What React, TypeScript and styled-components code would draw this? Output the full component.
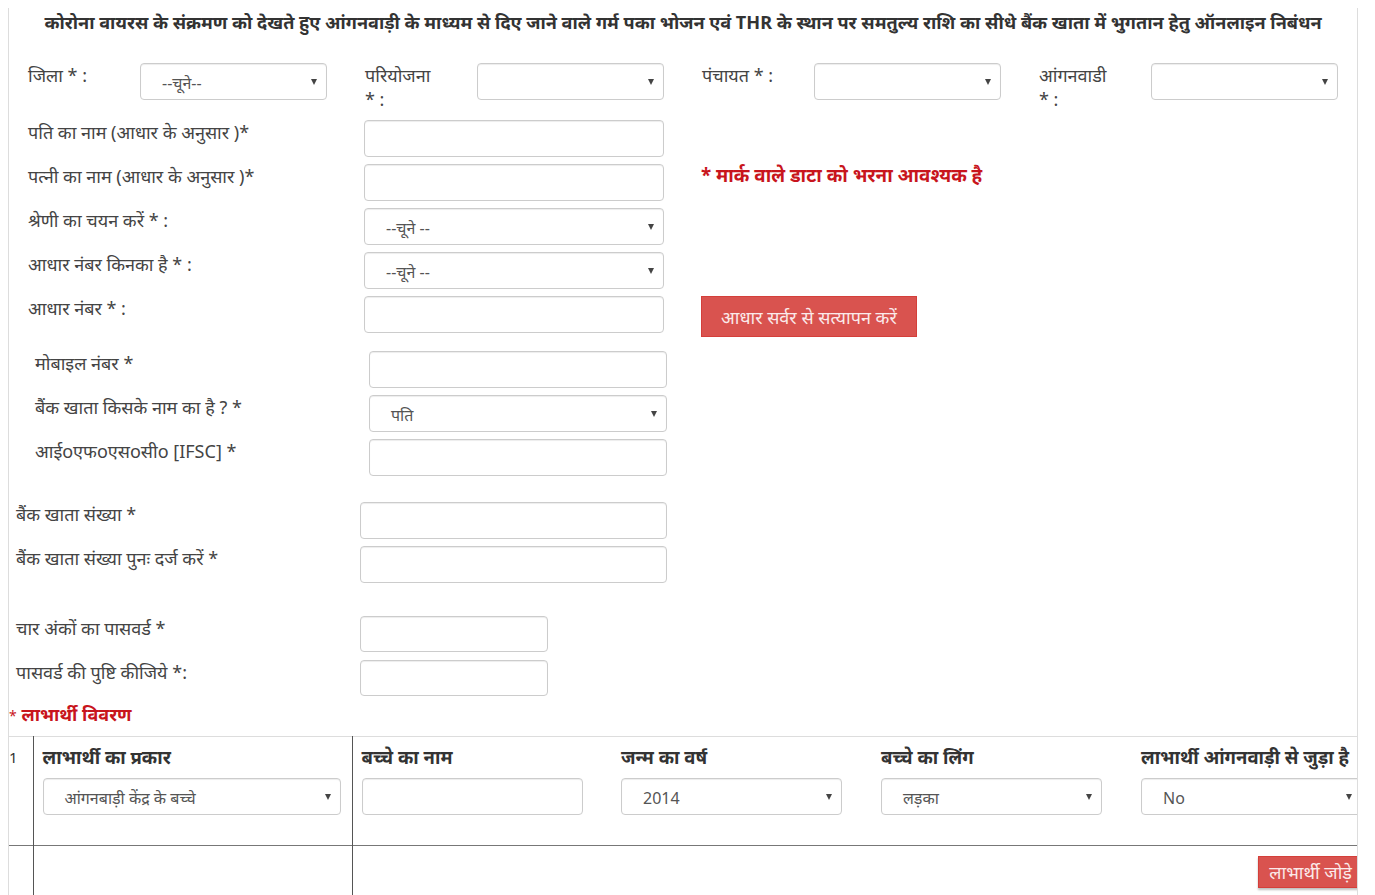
import React from "react";
import styled, { createGlobalStyle } from "styled-components";

const GlobalStyle = createGlobalStyle`
    body {
        margin: 8px;
        background: #fff;
        font-family: "Noto Sans", "Noto Sans Devanagari", "Liberation Sans", sans-serif;
        color: #333;
    }
    * {
        box-sizing: border-box;
    }
`;

const Panel = styled.div`
    width: 1350px;
    min-height: 900px;
    border-left: 1px solid #ddd;
    border-right: 1px solid #ddd;
    overflow: hidden;
`;

const Title = styled.h3`
    margin: 0;
    padding: 0;
    text-align: center;
    font-size: 18.1px;
    font-weight: 700;
    color: #333;
    line-height: 28px;
`;

const TopGrid = styled.div`
    display: grid;
    grid-template-columns: repeat(4, 337px);
    padding: 27px 0 0 19px;
`;

const TopCell = styled.div`
    display: grid;
    grid-template-columns: 112px 187px;
`;

const Label = styled.label`
    font-size: 18px;
    line-height: 24px;
    color: #444;
`;

const Row = styled.div<{ $left: number; $label: number; $top?: number }>`
    display: grid;
    grid-template-columns: ${(p) => p.$label}px auto 1fr;
    align-items: start;
    padding-left: ${(p) => p.$left}px;
    margin-top: ${(p) => p.$top ?? 7}px;
`;

const Input = styled.input<{ $w: number; $h?: number }>`
    width: ${(p) => p.$w}px;
    height: ${(p) => p.$h ?? 37}px;
    border: 1px solid #ccc;
    border-radius: 4px;
    box-shadow: inset 0 1px 1px rgba(0, 0, 0, 0.075);
    background: #fff;
    padding: 0 12px;
    font-size: 15px;
    outline: none;
`;

const SelectBox = styled.div<{ $w: number }>`
    position: relative;
    width: ${(p) => p.$w}px;
    height: 37px;
    border: 1px solid #ccc;
    border-radius: 4px;
    box-shadow: inset 0 1px 1px rgba(0, 0, 0, 0.075);
    background: #fff;
    padding: 2px 0 0 21px;
    display: flex;
    align-items: center;
    font-size: 16px;
    color: #555;
    white-space: nowrap;

    &::after {
        content: "";
        position: absolute;
        right: 9px;
        top: 15px;
        border-left: 3.5px solid transparent;
        border-right: 3.5px solid transparent;
        border-top: 6px solid #444;
    }
`;

const Side = styled.div`
    padding-left: 37px;
`;

const Note = styled.div`
    color: #c8151d;
    font-weight: 700;
    font-size: 18.8px;
    line-height: 22px;
`;

const RedButton = styled.button`
    background: #d9534f;
    color: #fbeaea;
    border: 1px solid #d43f3a;
    border-radius: 0;
    height: 41px;
    padding: 0 19px;
    font-size: 18px;
    font-family: inherit;
    cursor: pointer;
`;

const Group = styled.div<{ $top: number }>`
    margin-top: ${(p) => p.$top}px;
`;

const SectionHead = styled.div`
    margin-top: 6px;
    color: #c8151d;
    font-weight: 700;
    font-size: 18px;
    line-height: 24px;

    span {
        font-weight: 400;
        font-size: 14px;
    }
`;

const Table = styled.table`
    margin-top: 8px;
    border-collapse: collapse;
    table-layout: fixed;
    width: 1383px;

    tr:first-child td {
        border-top: 1px solid #ddd;
    }
`;

const Td = styled.td<{ $w?: number; $line?: boolean }>`
    width: ${(p) => (p.$w ? `${p.$w}px` : "auto")};
    vertical-align: top;
    padding: 7px 0 0 9px;
    border-right: ${(p) => (p.$line ? "1px solid #555" : "none")};
`;

const NumTd = styled(Td)`
    padding: 10px 0 0 0;
    font-size: 15px;
    color: #333;
`;

const FirstRow = styled.tr`
    height: 109px;
    border-bottom: 1px solid #777;
`;

const SecondRow = styled.tr`
    height: 60px;
`;

const Head = styled.div`
    font-size: 18.5px;
    font-weight: 700;
    line-height: 26px;
    color: #333;
    margin-bottom: 8px;
    white-space: nowrap;
`;

const ButtonCell = styled.td`
    text-align: right;
    padding: 10px 29px 0 0;
    vertical-align: top;
`;

const SmallRed = styled(RedButton)`
    height: 32px;
    padding: 0 10px;
    font-size: 18px;
    box-shadow: 0 2px 2px rgba(0, 0, 0, 0.25);
`;

type Col = { head: string; kind: "select" | "input"; value?: string; w: number };

const cols: Col[] = [
    { head: "बच्चे का नाम", kind: "input", w: 221 },
    { head: "जन्म का वर्ष", kind: "select", value: "2014", w: 221 },
    { head: "बच्चे का लिंग", kind: "select", value: "लड़का", w: 221 },
    { head: "लाभार्थी आंगनवाड़ी से जुड़ा है", kind: "select", value: "No", w: 221 },
];

const App = () => {
    return (
        <>
            <GlobalStyle />
            <Panel>
                <Title>
                    कोरोना वायरस के संक्रमण को देखते हुए आंगनवाड़ी के माध्यम से दिए जाने वाले गर्म पका भोजन एवं THR के स्थान पर समतुल्य राशि का सीधे बैंक खाता में भुगतान हेतु ऑनलाइन निबंधन
                </Title>

                <TopGrid>
                    <TopCell>
                        <Label>जिला * :</Label>
                        <SelectBox $w={187}>--चूने--</SelectBox>
                    </TopCell>
                    <TopCell>
                        <Label>परियोजना<br />* :</Label>
                        <SelectBox $w={187} />
                    </TopCell>
                    <TopCell>
                        <Label>पंचायत * :</Label>
                        <SelectBox $w={187} />
                    </TopCell>
                    <TopCell>
                        <Label>आंगनवाडी<br />* :</Label>
                        <SelectBox $w={187} />
                    </TopCell>
                </TopGrid>

                <Row $left={19} $label={336} $top={9}>
                    <Label>पति का नाम (आधार के अनुसार )*</Label>
                    <Input $w={300} />
                </Row>
                <Row $left={19} $label={336}>
                    <Label>पत्नी का नाम (आधार के अनुसार )*</Label>
                    <Input $w={300} />
                    <Side>
                        <Note>* मार्क वाले डाटा को भरना आवश्यक है</Note>
                    </Side>
                </Row>
                <Row $left={19} $label={336}>
                    <Label>श्रेणी का चयन करें * :</Label>
                    <SelectBox $w={300}>--चूने --</SelectBox>
                </Row>
                <Row $left={19} $label={336}>
                    <Label>आधार नंबर किनका है * :</Label>
                    <SelectBox $w={300}>--चूने --</SelectBox>
                </Row>
                <Row $left={19} $label={336}>
                    <Label>आधार नंबर * :</Label>
                    <Input $w={300} />
                    <Side>
                        <RedButton>आधार सर्वर से सत्यापन करें</RedButton>
                    </Side>
                </Row>

                <Group $top={14}>
                    <Row $left={26} $label={334}>
                        <Label>मोबाइल नंबर *</Label>
                        <Input $w={298} />
                    </Row>
                    <Row $left={26} $label={334}>
                        <Label>बैंक खाता किसके नाम का है ? *</Label>
                        <SelectBox $w={298}>पति</SelectBox>
                    </Row>
                    <Row $left={26} $label={334}>
                        <Label>आईoएफoएसoसीo [IFSC] *</Label>
                        <Input $w={298} />
                    </Row>
                </Group>

                <Group $top={26}>
                    <Row $left={7} $label={344}>
                        <Label>बैंक खाता संख्या *</Label>
                        <Input $w={307} />
                    </Row>
                    <Row $left={7} $label={344}>
                        <Label>बैंक खाता संख्या पुनः दर्ज करें *</Label>
                        <Input $w={307} />
                    </Row>
                </Group>

                <Group $top={33}>
                    <Row $left={7} $label={344}>
                        <Label>चार अंकों का पासवर्ड *</Label>
                        <Input $w={188} $h={36} />
                    </Row>
                    <Row $left={7} $label={344} $top={8}>
                        <Label>पासवर्ड की पुष्टि कीजिये *:</Label>
                        <Input $w={188} $h={36} />
                    </Row>
                </Group>

                <SectionHead>
                    <span>*</span> लाभार्थी विवरण
                </SectionHead>

                <Table>
                    <tbody>
                        <FirstRow>
                            <NumTd $w={24} $line>1</NumTd>
                            <Td $w={319} $line>
                                <Head>लाभार्थी का प्रकार</Head>
                                <SelectBox $w={298}>आंगनबाड़ी केंद्र के बच्चे</SelectBox>
                            </Td>
                            {cols.map((c) => (
                                <Td key={c.head} $w={260}>
                                    <Head>{c.head}</Head>
                                    {c.kind === "input" ? (
                                        <Input $w={c.w} />
                                    ) : (
                                        <SelectBox $w={c.w}>{c.value}</SelectBox>
                                    )}
                                </Td>
                            ))}
                        </FirstRow>
                        <SecondRow>
                            <NumTd $line />
                            <Td $line />
                            <ButtonCell colSpan={4}>
                                <SmallRed>लाभार्थी जोड़े</SmallRed>
                            </ButtonCell>
                        </SecondRow>
                    </tbody>
                </Table>
            </Panel>
        </>
    );
};

export default App;
